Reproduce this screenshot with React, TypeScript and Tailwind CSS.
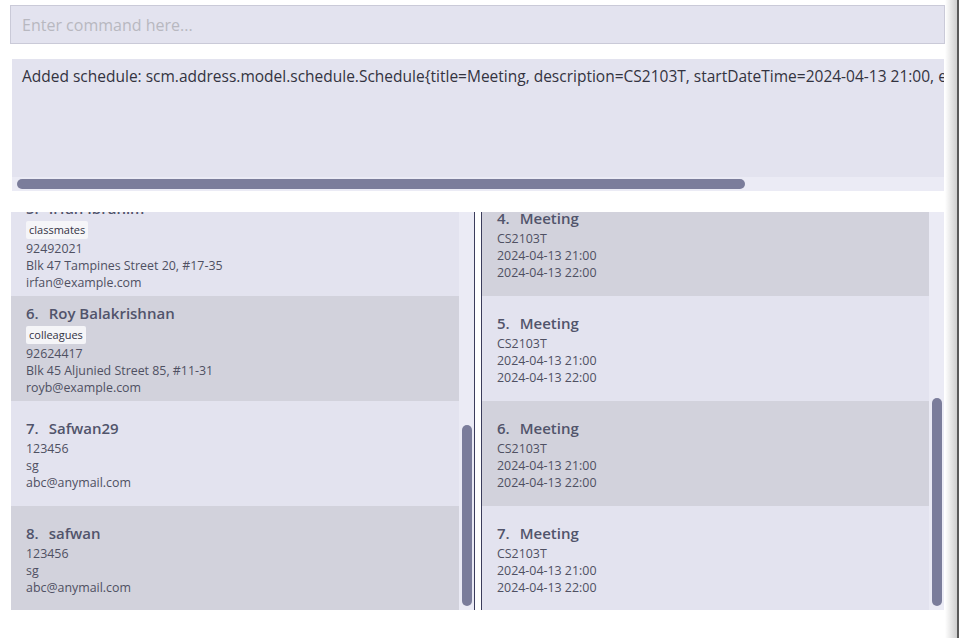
import React from "react";

type Person = { id: number; name: string; tag?: string; phone: string; address: string; email: string };

const people: Person[] = [
  { id: 5, name: "Irfan Ibrahim", tag: "classmates", phone: "92492021", address: "Blk 47 Tampines Street 20, #17-35", email: "irfan@example.com" },
  { id: 6, name: "Roy Balakrishnan", tag: "colleagues", phone: "92624417", address: "Blk 45 Aljunied Street 85, #11-31", email: "royb@example.com" },
  { id: 7, name: "Safwan29", phone: "123456", address: "sg", email: "abc@anymail.com" },
  { id: 8, name: "safwan", phone: "123456", address: "sg", email: "abc@anymail.com" },
];

const schedules = [4, 5, 6, 7];

const font = { fontFamily: '"Open Sans", "Noto Sans", sans-serif' };

function Title({ id, name }: { id: number; name: string }) {
  return (
    <div className="flex h-[24px] items-end gap-[10px] pb-[1px] text-[15px] font-semibold leading-[22px] text-[#51546b]">
      <span>{id}.</span>
      <span>{name}</span>
    </div>
  );
}

function Detail({ children }: { children: React.ReactNode }) {
  return <div className="h-[17px] text-[12.4px] leading-[17px] text-[#4f5062]">{children}</div>;
}

function PersonCard({ p, dark }: { p: Person; dark: boolean }) {
  return (
    <div className={`flex h-[105px] shrink-0 flex-col justify-center px-[15px] ${dark ? "bg-[#d2d2dc]" : "bg-[#e3e3ef]"}`}>
      <Title id={p.id} name={p.name} />
      {p.tag && (
        <div className="mt-[1px] mb-[1px] flex">
          <span className="h-[18px] rounded-[2px] bg-[#f5f5f8] px-[3px] text-[11px] leading-[18px] text-[#333344]">{p.tag}</span>
        </div>
      )}
      <Detail>{p.phone}</Detail>
      <Detail>{p.address}</Detail>
      <Detail>{p.email}</Detail>
    </div>
  );
}

function ScheduleCard({ id, dark }: { id: number; dark: boolean }) {
  return (
    <div className={`flex h-[105px] shrink-0 flex-col justify-center px-[15px] ${dark ? "bg-[#d2d2dc]" : "bg-[#e3e3ef]"}`}>
      <Title id={id} name="Meeting" />
      <Detail>CS2103T</Detail>
      <Detail>2024-04-13 21:00</Detail>
      <Detail>2024-04-13 22:00</Detail>
    </div>
  );
}

function VScroll({ top, height }: { top: number; height: number }) {
  return (
    <div className="relative w-[15px] shrink-0 bg-[#ebebf5]">
      <div className="absolute left-[3px] w-[10px] rounded-full bg-[#7b7d9b]" style={{ top, height }} />
    </div>
  );
}

export default function App() {
  return (
    <div className="flex h-[638px] w-[959px] overflow-hidden bg-white" style={font}>
      <div className="flex w-[945px] shrink-0 flex-col pt-[5px]">
        <div className="ml-[10px] flex h-[39px] w-[935px] items-center border border-[#cacad8] bg-[#e3e3ef] pl-[11px] text-[16px] text-[#b8b8c0]">
          Enter command here...
        </div>
        <div className="ml-[12px] mt-[15px] flex h-[132px] w-[932px] flex-col bg-[#e3e3ef]">
          <div className="flex-1 overflow-hidden whitespace-nowrap pl-[10px] pt-[7px] text-[15.5px] leading-[20px] text-[#33333f]">
            Added schedule: scm.address.model.schedule.Schedule{"{"}title=Meeting, description=CS2103T, startDateTime=2024-04-13 21:00, endDateTime=2024-04-13 22:00{"}"}
          </div>
          <div className="flex h-[14px] items-center bg-[#ebebf5] pl-[5px]">
            <div className="h-[10px] w-[728px] rounded-full bg-[#7b7d9b]" />
          </div>
        </div>
        <div className="ml-[11px] mt-[21px] flex h-[398px] w-[933px]">
          <div className="flex w-[464px] border-r border-[#3b3d5c]">
            <div className="flex-1 overflow-hidden">
              <div className="-mt-[21px] flex flex-col">
                {people.map((p, i) => (
                  <PersonCard key={p.id} p={p} dark={i % 2 === 1} />
                ))}
              </div>
            </div>
            <VScroll top={213} height={181} />
          </div>
          <div className="w-[6px] shrink-0" />
          <div className="flex w-[463px] border-l border-[#3b3d5c]">
            <div className="flex-1 overflow-hidden">
              <div className="-mt-[21px] flex flex-col">
                {schedules.map((s, i) => (
                  <ScheduleCard key={s} id={s} dark={i % 2 === 0} />
                ))}
              </div>
            </div>
            <div className="relative w-[15px] shrink-0 bg-[#ebebf5]">
              <div className="absolute left-[3px] top-[186px] h-[208px] w-[10px] rounded-full bg-[#7b7d9b]" />
            </div>
          </div>
        </div>
      </div>
      <div className="h-full w-[12px] shrink-0 bg-gradient-to-r from-[#ffffff] to-[#cfcfcf]" />
      <div className="h-full w-[2px] shrink-0 bg-[#5a5a5a]" />
    </div>
  );
}
